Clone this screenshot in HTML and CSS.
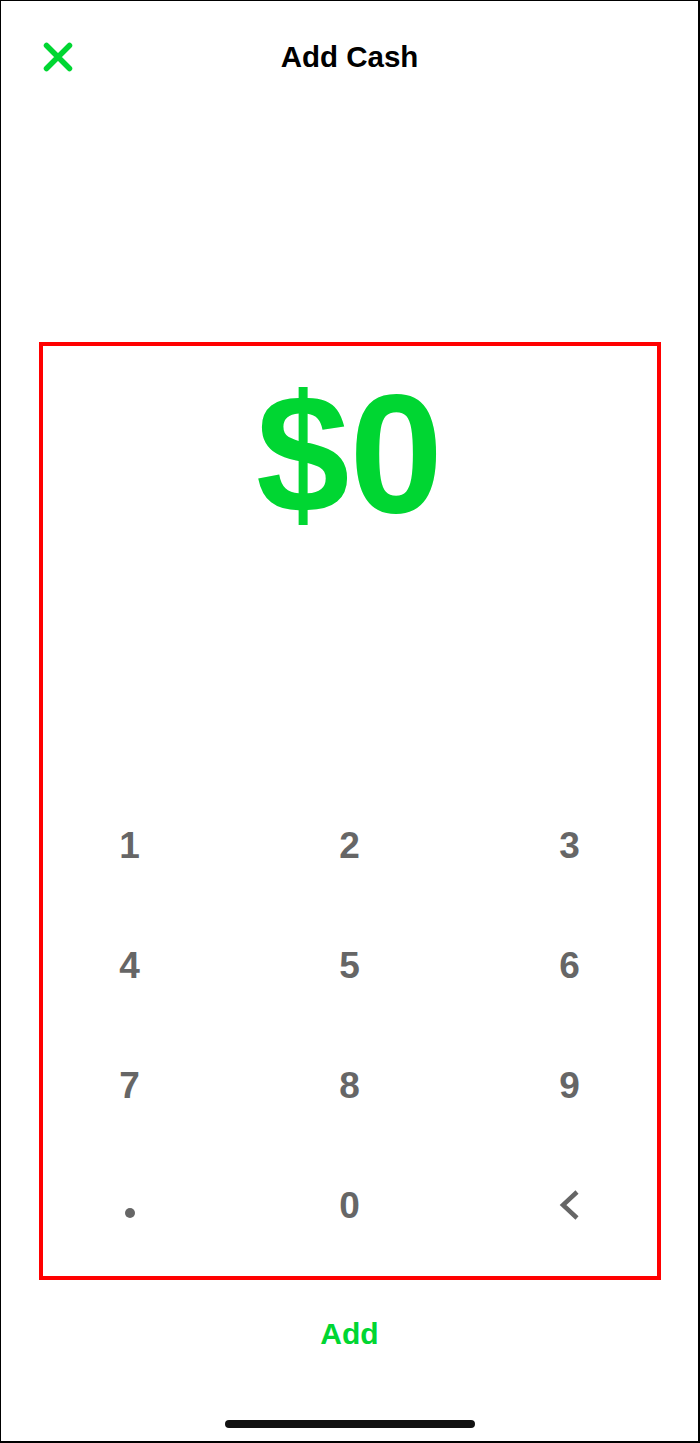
FILE: index.html
```html
<!DOCTYPE html>
<html lang="en">
<head>
<meta charset="utf-8">
<title>Add Cash</title>
<link rel="stylesheet" href="styles.css">
</head>
<body>
<div class="screen">
  <header class="topbar">
    <div class="topbar-left">
      <svg class="close-icon" width="32" height="32" viewBox="0 0 32 32" aria-hidden="true">
        <path d="M4.5 4.5 L27.5 27.5 M27.5 4.5 L4.5 27.5" stroke="#00d632" stroke-width="5.5" stroke-linecap="round" fill="none"/>
      </svg>
    </div>
    <h1 class="title">Add Cash</h1>
    <div class="topbar-right"></div>
  </header>

  <div class="amount">$0</div>

  <div class="keypad">
    <div class="key">1</div>
    <div class="key">2</div>
    <div class="key">3</div>
    <div class="key">4</div>
    <div class="key">5</div>
    <div class="key">6</div>
    <div class="key">7</div>
    <div class="key">8</div>
    <div class="key">9</div>
    <div class="key"><span class="dot"></span></div>
    <div class="key">0</div>
    <div class="key">
      <svg class="back-icon" width="24" height="32" viewBox="0 0 24 32" aria-hidden="true">
        <path d="M19 3 L5 16 L19 29" stroke="#666666" stroke-width="4.5" fill="none" stroke-linejoin="miter"/>
      </svg>
    </div>
  </div>

  <div class="add-row"><span class="add-btn">Add</span></div>

  <div class="home-row"><span class="home-indicator"></span></div>
</div>
<div class="highlight"></div>
</body>
</html>
```

FILE: styles.css
```css
* {
  box-sizing: border-box;
}

html, body {
  margin: 0;
  padding: 0;
}

body {
  width: 700px;
  height: 1443px;
  background: #ffffff;
  border-style: solid;
  border-color: #000000;
  border-width: 1px 2px 2px 1px;
  font-family: "Liberation Sans", Arial, sans-serif;
  overflow: hidden;
}

.screen {
  display: flex;
  flex-direction: column;
  height: 100%;
}

.topbar {
  display: grid;
  grid-template-columns: 1fr auto 1fr;
  align-items: center;
  height: 112px;
}

.topbar-left {
  padding-left: 41px;
  display: flex;
  align-items: center;
}

.close-icon {
  display: block;
}

.title {
  margin: 0;
  font-size: 29.5px;
  font-weight: 700;
  color: #000000;
}

.amount {
  margin-top: 256px;
  height: 170px;
  font-size: 168px;
  line-height: 170px;
  font-weight: 700;
  color: #00d632;
  text-align: center;
  letter-spacing: 0;
}

.keypad {
  margin-top: 246px;
  display: grid;
  grid-template-columns: repeat(3, 220px);
  grid-auto-rows: 120px;
  justify-content: center;
}

.key {
  display: flex;
  align-items: center;
  justify-content: center;
  font-size: 37px;
  font-weight: 700;
  color: #666666;
  line-height: 1;
}

.dot {
  width: 10px;
  height: 10px;
  border-radius: 50%;
  background: #666666;
  margin-top: 15px;
}

.back-icon {
  display: block;
  margin-left: 1px;
}

.add-row {
  margin-top: 39px;
  height: 60px;
  display: flex;
  align-items: center;
  justify-content: center;
}

.add-btn {
  font-size: 30px;
  font-weight: 700;
  color: #00d632;
}

.home-row {
  margin-top: 56px;
  display: flex;
  justify-content: center;
}

.home-indicator {
  width: 250px;
  height: 8px;
  border-radius: 4px;
  background: #111111;
}

.highlight {
  position: absolute;
  left: 39px;
  top: 342px;
  width: 622px;
  height: 938px;
  border: 4px solid #ff0000;
  pointer-events: none;
}
```
